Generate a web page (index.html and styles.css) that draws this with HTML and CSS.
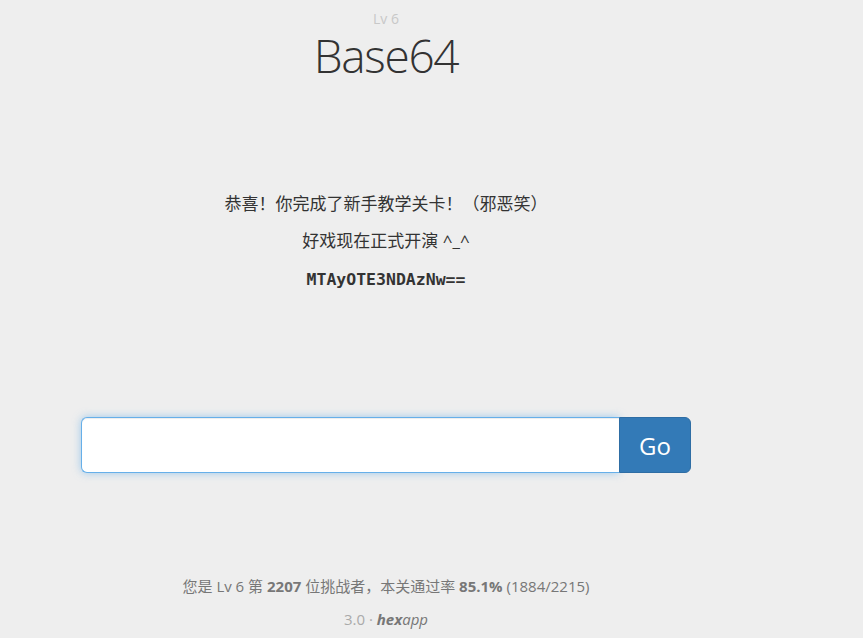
FILE: index.html
```html
<!DOCTYPE html>
<html lang="zh">
<head>
<meta charset="utf-8">
<title>Base64</title>
<link rel="stylesheet" href="styles.css">
</head>
<body>
<div class="page">
  <header class="head">
    <div class="level">Lv 6</div>
    <h1 class="title">Base64</h1>
  </header>
  <main class="content">
    <p class="line">恭喜！你完成了新手教学关卡！（邪恶笑）</p>
    <p class="line">好戏现在正式开演 ^_^</p>
    <p class="code">MTAyOTE3NDAzNw==</p>
  </main>
  <form class="answer" onsubmit="return false">
    <input class="answer-input" type="text" autofocus>
    <button class="answer-btn" type="submit">Go</button>
  </form>
  <footer class="foot">
    <p class="stats">您是 Lv 6 第 <b>2207</b> 位挑战者，本关通过率 <b>85.1%</b> (1884/2215)</p>
    <p class="brand">3.0 · <i><b>hex</b>app</i></p>
  </footer>
</div>
</body>
</html>
```
FILE: styles.css
```css
html, body {
  margin: 0;
  padding: 0;
  background: #eeeeee;
}
body {
  font-family: "Open Sans", "Noto Sans CJK SC", sans-serif;
  color: #333;
}
.page {
  width: 772px;
  display: flex;
  flex-direction: column;
  align-items: center;
}
.head {
  display: flex;
  flex-direction: column;
  align-items: center;
  padding-top: 9px;
}
.level {
  font-size: 14px;
  line-height: 20px;
  color: #c8c8c8;
}
.title {
  margin: 0;
  font-size: 46px;
  font-weight: 300;
  line-height: 52px;
  color: #333;
  letter-spacing: -1.3px;
}
.content {
  margin-top: 110px;
  display: flex;
  flex-direction: column;
  align-items: center;
}
.line {
  margin: 0 0 12px;
  font-size: 17px;
  line-height: 25px;
  color: #333;
}
.code {
  margin: 4px 0 0;
  font-family: "DejaVu Sans Mono", monospace;
  font-weight: bold;
  font-size: 16.5px;
  line-height: 22px;
  color: #333;
}
.answer {
  margin-top: 126px;
  width: 610px;
  display: flex;
}
.answer-input {
  flex: 1;
  height: 56px;
  box-sizing: border-box;
  border: 1px solid #66afe9;
  border-right: none;
  border-radius: 6px 0 0 6px;
  background: #fff;
  box-shadow: inset 0 1px 1px rgba(0,0,0,.075), 0 0 8px rgba(102,175,233,.6);
  outline: none;
  font-size: 18px;
  padding: 10px 16px;
}
.answer-btn {
  width: 72px;
  height: 56px;
  border: 1px solid #2e6da4;
  border-radius: 0 6px 6px 0;
  background: #337ab7;
  color: #fff;
  font-family: "Open Sans", sans-serif;
  font-size: 24px;
  padding: 0;
}
.foot {
  margin-top: 102px;
  display: flex;
  flex-direction: column;
  align-items: center;
}
.stats {
  margin: 0;
  font-size: 15px;
  line-height: 22px;
  color: #777;
}
.stats b {
  font-weight: bold;
}
.brand {
  margin: 11px 0 0;
  font-size: 15px;
  line-height: 22px;
  color: #aaa;
}
.brand i {
  color: #777;
}
```
